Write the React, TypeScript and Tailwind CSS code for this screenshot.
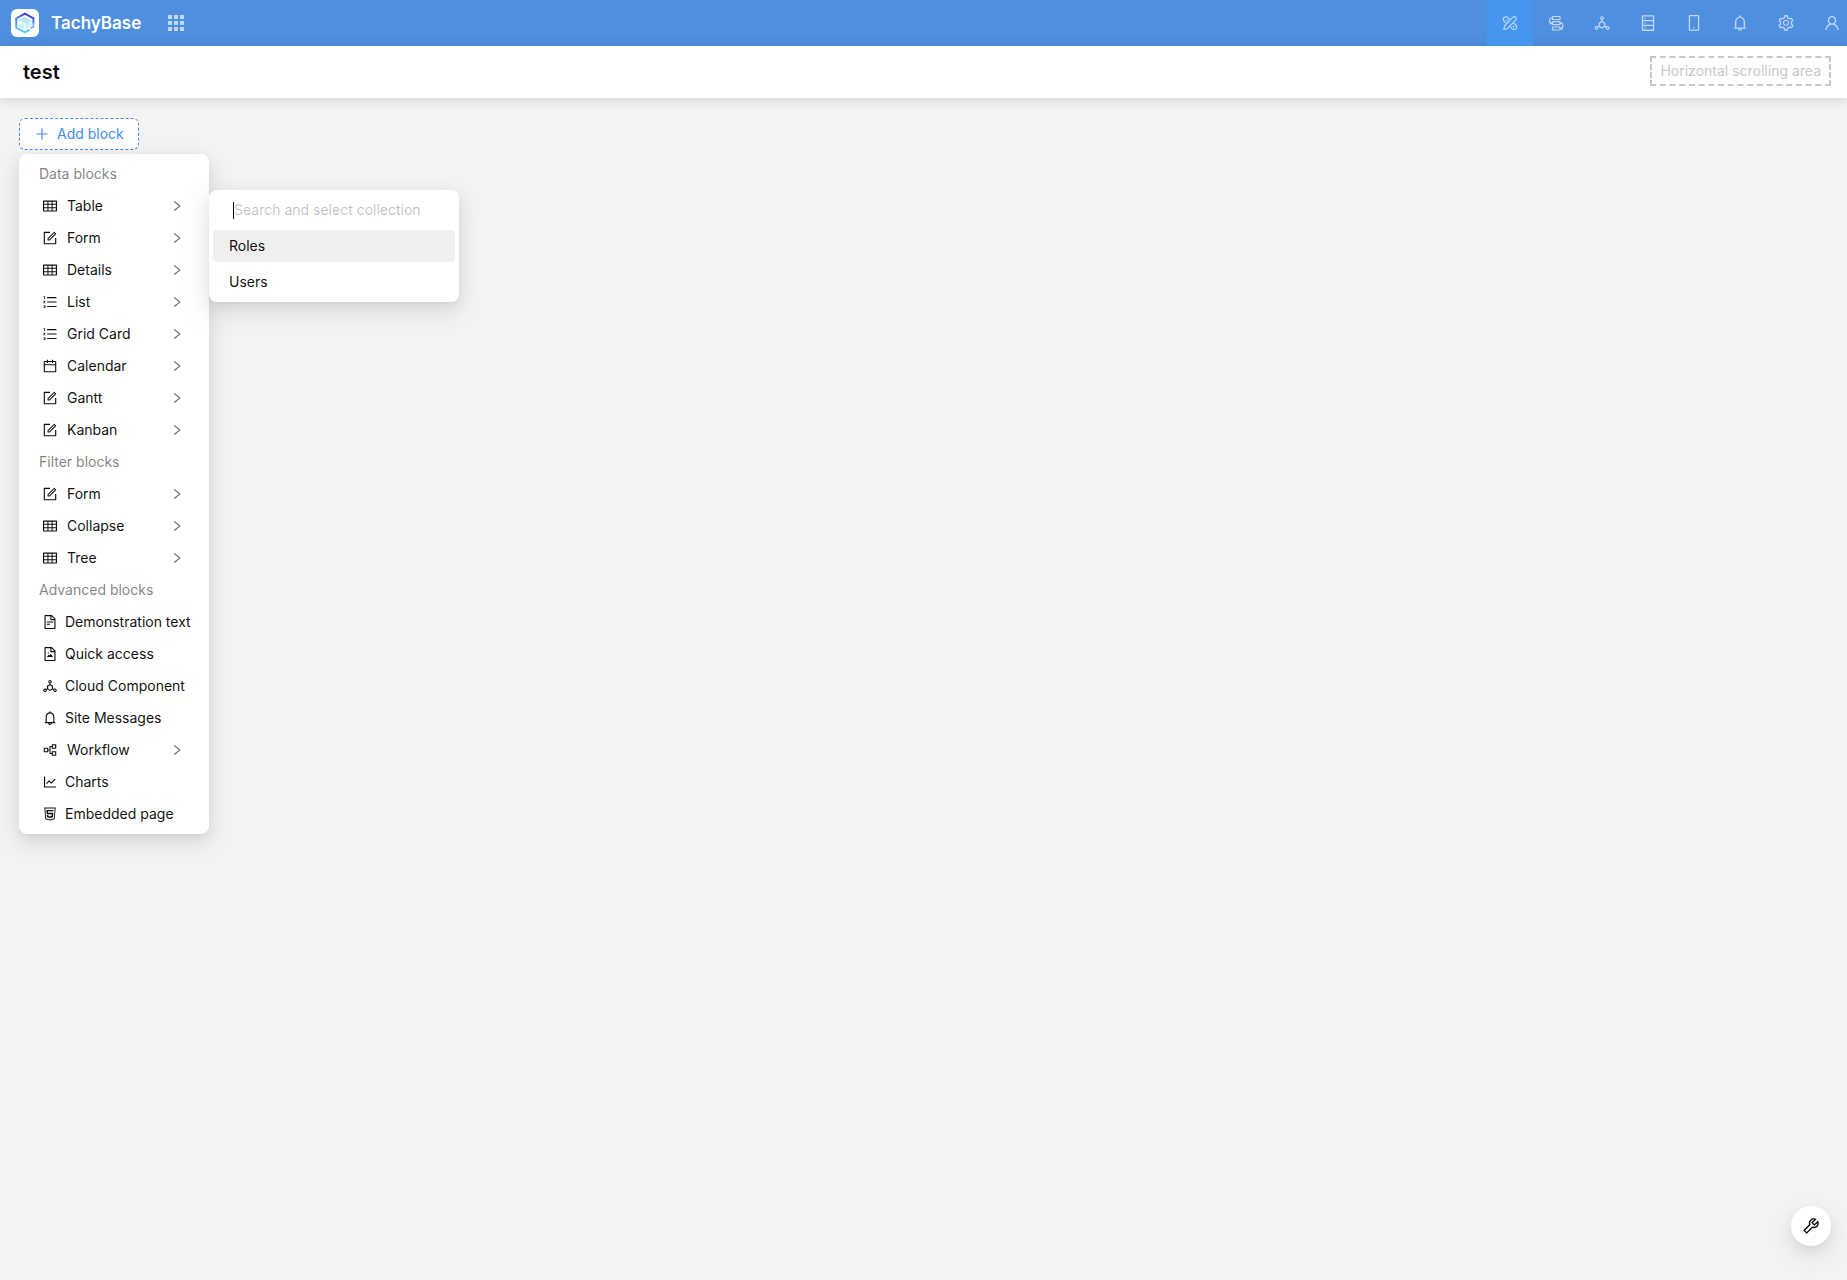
import React from "react";
import type { ReactNode } from "react";
import type { IconType } from "react-icons";
import {
  AiOutlineBell,
  AiOutlineCalendar,
  AiOutlineDatabase,
  AiOutlineDeploymentUnit,
  AiOutlineFileImage,
  AiOutlineFileText,
  AiOutlineForm,
  AiOutlineHtml5,
  AiOutlineLineChart,
  AiOutlineMobile,
  AiOutlineOrderedList,
  AiOutlinePartition,
  AiOutlinePlus,
  AiOutlineRight,
  AiOutlineSetting,
  AiOutlineTable,
  AiOutlineTool,
  AiOutlineUser,
} from "react-icons/ai";

type Item = { label: string; icon: IconType; sub?: boolean };
type Group = { title: string; items: Item[] };

const groups: Group[] = [
  {
    title: "Data blocks",
    items: [
      { label: "Table", icon: AiOutlineTable, sub: true },
      { label: "Form", icon: AiOutlineForm, sub: true },
      { label: "Details", icon: AiOutlineTable, sub: true },
      { label: "List", icon: AiOutlineOrderedList, sub: true },
      { label: "Grid Card", icon: AiOutlineOrderedList, sub: true },
      { label: "Calendar", icon: AiOutlineCalendar, sub: true },
      { label: "Gantt", icon: AiOutlineForm, sub: true },
      { label: "Kanban", icon: AiOutlineForm, sub: true },
    ],
  },
  {
    title: "Filter blocks",
    items: [
      { label: "Form", icon: AiOutlineForm, sub: true },
      { label: "Collapse", icon: AiOutlineTable, sub: true },
      { label: "Tree", icon: AiOutlineTable, sub: true },
    ],
  },
  {
    title: "Advanced blocks",
    items: [
      { label: "Demonstration text", icon: AiOutlineFileText },
      { label: "Quick access", icon: AiOutlineFileImage },
      { label: "Cloud Component", icon: AiOutlineDeploymentUnit },
      { label: "Site Messages", icon: AiOutlineBell },
      { label: "Workflow", icon: AiOutlinePartition, sub: true },
      { label: "Charts", icon: AiOutlineLineChart },
      { label: "Embedded page", icon: AiOutlineHtml5 },
    ],
  },
];

function Logo() {
  return (
    <svg viewBox="0 0 28 28" className="size-7" aria-hidden="true">
      <defs>
        <linearGradient id="ring" x1="0.3" y1="0" x2="0.1" y2="1">
          <stop offset="0" stopColor="#3f3fe0" />
          <stop offset="0.45" stopColor="#5f8df6" />
          <stop offset="1" stopColor="#4fdcf8" />
        </linearGradient>
        <linearGradient id="core" x1="0" y1="0" x2="1" y2="1">
          <stop offset="0" stopColor="#8fe0fb" />
          <stop offset="1" stopColor="#e6f8fe" />
        </linearGradient>
      </defs>
      <rect width="28" height="28" rx="6" fill="#fff" />
      <path d="M7 11.2 14 8 20.5 11.5V17.5L14 21.3V14.6Z" fill="url(#core)" />
      <path d="M7 16.5 13 13.4V20.6L7 17.6Z" fill="#c4effc" />
      <path d="M9.5 12.2 14 14.6V21" fill="none" stroke="#fff" strokeWidth="1" />
      <path d="M22.4 14.5V9.4L13.9 4.6 5.2 9.5V18.6L13.9 23.4 18.6 20.8" fill="none" stroke="url(#ring)" strokeWidth="2" />
      <path d="M19.6 19.2 22.4 18V13.5" fill="none" stroke="#86a8fa" strokeWidth="1.8" />
    </svg>
  );
}

function GridIcon() {
  return (
    <svg viewBox="0 0 16 16" className="size-4" fill="currentColor" aria-hidden="true">
      {[0, 6, 12].map((y) => [0, 6, 12].map((x) => <rect key={`${x}-${y}`} x={x} y={y} width="4" height="4" />))}
    </svg>
  );
}

function DesignIcon() {
  return (
    <svg viewBox="0 0 18 18" className="size-[18px]" fill="none" stroke="currentColor" strokeWidth="1.1" strokeLinejoin="round" aria-hidden="true">
      <path d="M11.8 3.4Q13.3 2 14.8 3.3 16.1 4.8 14.7 6.2L6.2 14.7 2.8 15.5 3.5 12Z" />
      <path d="M5 9.2 3.2 7.4Q1.4 5.3 3.1 3.5 5.1 1.9 7 3.6L8.7 5.4" />
      <path d="M6.7 5.3 5.2 6.8" />
      <path d="M12.6 8.9 14.9 11.1Q16.6 13 14.9 14.8 13 16.4 11.1 14.7L9.2 12.7" />
      <path d="M13.2 11.9 11.8 13.2" />
    </svg>
  );
}

function FlowIcon() {
  return (
    <svg viewBox="0 0 18 18" className="size-[18px]" fill="none" stroke="currentColor" strokeWidth="1.2" aria-hidden="true">
      <rect x="5.5" y="2.5" width="7.5" height="3" rx="0.6" />
      <rect x="5.5" y="7.7" width="7.5" height="3" rx="0.6" />
      <rect x="5.5" y="13" width="7.5" height="3" rx="0.6" />
      <path d="M5.5 4H4.4Q2.6 4 2.6 5.7V7.4Q2.6 9.2 4.2 9.2M3.3 8 4.5 9.2 3.3 10.4" />
      <path d="M13 9.2H14Q15.8 9.2 15.8 11V12.7Q15.8 14.5 14.2 14.5M15.2 13.3 14 14.5 15.2 15.7" />
    </svg>
  );
}

function NavButton({ label, active, children }: { label: string; active?: boolean; children: ReactNode }) {
  return (
    <button
      type="button"
      aria-label={label}
      className={`flex size-[46px] shrink-0 items-center justify-center text-lg text-white/65 ${active ? "bg-[#4696ee]" : ""}`}
    >
      {children}
    </button>
  );
}

function MenuRow({ item }: { item: Item }) {
  const Icon = item.icon;
  return (
    <li>
      <button
        type="button"
        aria-haspopup={item.sub ? "menu" : undefined}
        className={`flex h-8 w-full items-center whitespace-nowrap pl-[19px] text-left ${item.sub ? "gap-[9px] pr-[21px]" : "gap-[7px] pr-3"}`}
      >
        <Icon className="size-4 shrink-0" />
        <span className="grow">{item.label}</span>
        {item.sub && <AiOutlineRight className="size-3.5 shrink-0 text-black/60" />}
      </button>
    </li>
  );
}

export default function App() {
  return (
    <div className="relative min-h-screen overflow-hidden bg-[#f4f4f4] font-['Inter',sans-serif] text-sm text-black/95">
      <header className="flex h-[46px] items-center bg-[#4f8fe0]">
        <a href="#" className="ml-[11px] flex items-center gap-3 text-[17px] font-semibold text-white">
          <Logo />
          TachyBase
        </a>
        <button type="button" aria-label="Applications" className="ml-3 flex size-[46px] items-center justify-center text-white/65">
          <GridIcon />
        </button>
        <nav className="-mr-2 ml-auto flex">
          <NavButton label="Design" active>
            <DesignIcon />
          </NavButton>
          <NavButton label="Workflow">
            <FlowIcon />
          </NavButton>
          <NavButton label="Components">
            <AiOutlineDeploymentUnit />
          </NavButton>
          <NavButton label="Data">
            <AiOutlineDatabase />
          </NavButton>
          <NavButton label="Mobile">
            <AiOutlineMobile />
          </NavButton>
          <NavButton label="Notifications">
            <AiOutlineBell />
          </NavButton>
          <NavButton label="Settings">
            <AiOutlineSetting />
          </NavButton>
          <NavButton label="Account">
            <AiOutlineUser />
          </NavButton>
        </nav>
      </header>

      <div className="flex h-[52px] items-center justify-between bg-white pr-4 pl-[23px] shadow-[0_2px_12px_rgba(0,0,0,0.14)]">
        <h1 className="text-xl font-semibold">test</h1>
        <div className="mb-0.5 border-2 border-dashed border-[#c8c8c8] px-2 leading-[26px] text-[#c8c8c8]">
          Horizontal scrolling area
        </div>
      </div>

      <main className="px-[19px] pt-5">
        <div className="relative w-fit">
          <button
            type="button"
            className="flex h-8 items-center gap-[7px] rounded-md border border-dashed border-[#3f8eea] bg-white px-3.5 text-[#3f8eea]"
          >
            <AiOutlinePlus className="size-4" />
            Add block
          </button>

          <div className="absolute top-9 left-0 flex items-start">
            <div className="w-[190px] shrink-0 rounded-lg bg-white p-1 shadow-[0_6px_16px_rgba(0,0,0,0.08),0_3px_6px_-4px_rgba(0,0,0,0.12),0_9px_28px_8px_rgba(0,0,0,0.05)]">
              {groups.map((group) => (
                <section key={group.title}>
                  <h2 className="px-4 leading-8 text-black/50">{group.title}</h2>
                  <ul>
                    {group.items.map((item) => (
                      <MenuRow key={item.label} item={item} />
                    ))}
                  </ul>
                </section>
              ))}
            </div>
            <div className="mt-9 w-[250px] shrink-0 rounded-lg bg-white p-1 shadow-[0_6px_16px_rgba(0,0,0,0.08),0_3px_6px_-4px_rgba(0,0,0,0.12),0_9px_28px_8px_rgba(0,0,0,0.05)]">
              <div className="flex h-8 items-center pl-5">
                <span className="h-[17px] w-px shrink-0 bg-black" />
                <input
                  type="text"
                  aria-label="Search and select collection"
                  placeholder="Search and select collection"
                  className="min-w-0 grow bg-transparent outline-none placeholder:text-black/25"
                />
              </div>
              <ul className="mt-1 flex flex-col gap-1">
                <li>
                  <button type="button" className="h-8 w-full rounded bg-[#efefef] px-4 text-left">
                    Roles
                  </button>
                </li>
                <li>
                  <button type="button" className="h-8 w-full rounded px-4 text-left">
                    Users
                  </button>
                </li>
              </ul>
            </div>
          </div>
        </div>
      </main>

      <button
        type="button"
        aria-label="Tools"
        className="fixed right-4 bottom-[34px] flex size-10 items-center justify-center rounded-full bg-white text-xl shadow-[0_6px_16px_rgba(0,0,0,0.08),0_3px_6px_-4px_rgba(0,0,0,0.12),0_9px_28px_8px_rgba(0,0,0,0.05)]"
      >
        <AiOutlineTool />
      </button>
    </div>
  );
}
